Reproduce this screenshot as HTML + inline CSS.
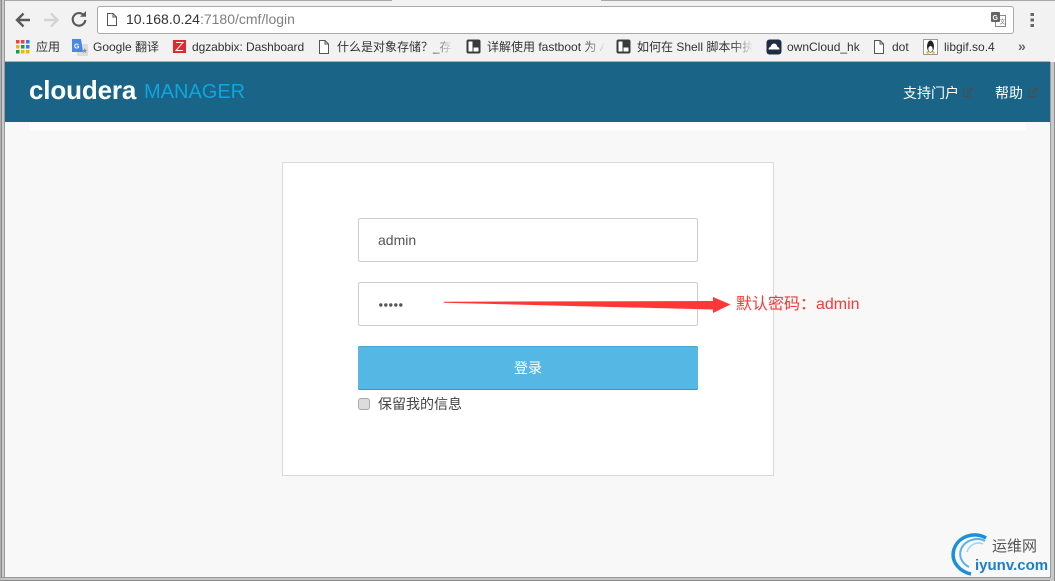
<!DOCTYPE html>
<html>
<head>
<meta charset="utf-8">
<style>
html,body{margin:0;padding:0}
body{width:1055px;height:581px;position:relative;overflow:hidden;background:#f8f8f8;font-family:"Liberation Sans","Noto Sans CJK SC",sans-serif;}
.a{position:absolute;white-space:nowrap}
.bm{position:absolute;top:39px;font-size:12px;line-height:16px;color:#333;white-space:nowrap;overflow:hidden}
.fade{-webkit-mask-image:linear-gradient(90deg,#000 82%,transparent);mask-image:linear-gradient(90deg,#000 82%,transparent)}
svg{position:absolute;overflow:visible}
</style>
</head>
<body>
<!-- chrome -->
<div class="a" style="left:0;top:0;width:1055px;height:62px;background:#f2f2f2"></div>
<div class="a" style="left:0;top:0;width:392px;height:1px;background:#a8a8a8"></div>
<div class="a" style="left:601px;top:0;width:454px;height:1px;background:#a8a8a8"></div>
<div class="a" style="left:5px;top:61px;width:1045px;height:1px;background:#a9b4ba"></div>

<!-- nav icons -->
<svg style="left:0;top:0" width="100" height="40">
<path d="M30 20H18M23.500 13.500L17 20L23.500 26.500" fill="none" stroke="#5a5a5a" stroke-width="2.400"/>
<path d="M44 20H56.500M51 13.500L57.500 20L51 26.500" fill="none" stroke="#d4d4d4" stroke-width="2.400"/>
<path d="M84 15.500A6.300 6.300 0 1 0 85.300 20" fill="none" stroke="#5a5a5a" stroke-width="2.200"/>
<path d="M80 16.800H86V11Z" fill="#5a5a5a"/>
</svg>

<!-- url bar -->
<div class="a" style="left:97px;top:6px;width:915px;height:26px;background:#fff;border:1px solid #a9a9a9;border-radius:3px"></div>
<svg style="left:106px;top:13px" width="12" height="13">
<path d="M1.500 .5H7L10.500 4V12.500H1.500Z M7 .5V4H10.500" fill="#fff" stroke="#555" stroke-width="1"/>
</svg>
<div class="a" style="left:126px;top:11px;font-size:14px;line-height:17px;color:#333">10.168.0.24<span style="color:#808080">:7180/cmf/login</span></div>

<!-- translate icon -->
<svg style="left:991px;top:11px" width="15" height="16">
<rect x="4.500" y="4.500" width="10" height="11" fill="#fff" stroke="#8a8a8a"/>
<rect x="0" y="1" width="9" height="10" fill="#666" rx="1"/>
<text x="1.500" y="9" font-size="7" font-weight="bold" fill="#fff" font-family="Liberation Sans">G</text>
<text x="8.500" y="13" font-size="6" fill="#777" font-family="Noto Sans CJK SC">文</text>
</svg>
<!-- menu dots -->
<svg style="left:1029px;top:12px" width="8" height="16">
<rect x="1.500" y="1" width="3.500" height="3" fill="#666"/><rect x="1.500" y="6.500" width="3.500" height="3" fill="#666"/><rect x="1.500" y="12" width="3.500" height="3" fill="#666"/>
</svg>

<!-- bookmarks -->
<svg style="left:16px;top:40px" width="14" height="14">
<g>
<rect x="0" y="0" width="3.500" height="3.500" fill="#e8453c"/><rect x="5" y="0" width="3.500" height="3.500" fill="#e8453c"/><rect x="10" y="0" width="3.500" height="3.500" fill="#3b78e7"/>
<rect x="0" y="5" width="3.500" height="3.500" fill="#f4b400"/><rect x="5" y="5" width="3.500" height="3.500" fill="#0f9d58"/><rect x="10" y="5" width="3.500" height="3.500" fill="#3b78e7"/>
<rect x="0" y="10" width="3.500" height="3.500" fill="#0f9d58"/><rect x="5" y="10" width="3.500" height="3.500" fill="#f4b400"/><rect x="10" y="10" width="3.500" height="3.500" fill="#f4b400"/>
</g>
</svg>
<div class="bm" style="left:36px">应用</div>

<svg style="left:72px;top:39px" width="17" height="17">
<rect x="5" y="5" width="11" height="12" fill="#dcdcdc"/>
<path d="M0 0H9L11 13H0Z" fill="#4a86e8"/>
<text x="2" y="9.500" font-size="7" font-weight="bold" fill="#fff" font-family="Liberation Sans">G</text>
<text x="9.500" y="14" font-size="7" fill="#888" font-family="Liberation Sans">★</text>
</svg>
<div class="bm" style="left:93px">Google 翻译</div>

<svg style="left:172px;top:39px" width="15" height="15">
<rect x="1" y="1" width="13" height="13" fill="#e2282e"/>
<path d="M4 3.500H11L4 11.500H11" fill="none" stroke="#fff" stroke-width="1"/>
</svg>
<div class="bm" style="left:192px;letter-spacing:-.07px">dgzabbix: Dashboard</div>

<svg style="left:318px;top:40px" width="12" height="15">
<path d="M1.500 .5H7L10.500 4V13.500H1.500Z M7 .5V4H10.500" fill="#fff" stroke="#555" stroke-width="1"/>
</svg>
<div class="bm fade" style="left:337px;width:116px">什么是对象存储？_存储</div>

<svg style="left:466px;top:39px" width="16" height="16">
<rect x=".5" y=".5" width="14" height="14" rx="2" fill="#3a3a3a"/>
<rect x="2.500" y="2.500" width="4" height="10" fill="#fff"/><rect x="7.500" y="8.500" width="5" height="4" fill="#fff"/>
</svg>
<div class="bm fade" style="left:487px;width:118px">详解使用 fastboot 为 A</div>

<svg style="left:616px;top:39px" width="16" height="16">
<rect x=".5" y=".5" width="14" height="14" rx="2" fill="#3a3a3a"/>
<rect x="2.500" y="2.500" width="4" height="10" fill="#fff"/><rect x="7.500" y="8.500" width="5" height="4" fill="#fff"/>
</svg>
<div class="bm fade" style="left:637px;width:116px">如何在 Shell 脚本中执行</div>

<svg style="left:766px;top:39px" width="16" height="16">
<rect x=".5" y=".5" width="15" height="15" rx="3" fill="#1d2d44"/>
<path d="M2.500 10.500C2.500 9 3.500 8 4.500 8C5 6 6.500 4.500 8 4.500C10 4.500 11 6 11.500 8C12.500 8 13.500 9 13.500 10.500Z" fill="#fff"/>
</svg>
<div class="bm" style="left:787px">ownCloud_hk</div>

<svg style="left:873px;top:40px" width="12" height="15">
<path d="M1.500 .5H7L10.500 4V13.500H1.500Z M7 .5V4H10.500" fill="#fff" stroke="#555" stroke-width="1"/>
</svg>
<div class="bm" style="left:892px">dot</div>

<svg style="left:923px;top:39px" width="16" height="17">
<rect x=".5" y=".5" width="14" height="15" fill="#fff" stroke="#999"/>
<ellipse cx="7.500" cy="7.500" rx="3.500" ry="6" fill="#222"/>
<ellipse cx="7.500" cy="10" rx="2.200" ry="3" fill="#fff"/>
<path d="M2.500 14L5.500 11.500V15Z M12.500 14L9.500 11.500V15Z" fill="#e8b020"/>
</svg>
<div class="bm" style="left:944px">libgif.so.4</div>
<div class="a" style="left:1018px;top:38px;font-size:14px;line-height:16px;color:#666;font-weight:bold">»</div>

<!-- header -->
<div class="a" style="left:5px;top:62px;width:1045px;height:60px;background:#1a6587"></div>
<div class="a" style="left:29px;top:75px;font-size:26px;line-height:30px;font-weight:bold;color:#fff;letter-spacing:-.15px">cloudera</div>
<div class="a" style="left:144px;top:79px;font-size:20px;line-height:26px;color:#0fa5dc">MANAGER</div>
<div class="a" style="left:903px;top:84px;font-size:14px;line-height:18px;color:#fff">支持门户</div>
<svg style="left:962px;top:87px" width="12" height="12"><path d="M8 4.500V9.500H1.500V3H6M5 6L10 1M7 1H10V4" fill="none" stroke="#4d4d4d" stroke-width="1"/></svg>
<div class="a" style="left:995px;top:84px;font-size:14px;line-height:18px;color:#fff">帮助</div>
<svg style="left:1027px;top:87px" width="12" height="12"><path d="M8 4.500V9.500H1.500V3H6M5 6L10 1M7 1H10V4" fill="none" stroke="#4d4d4d" stroke-width="1"/></svg>

<!-- white strip -->
<div class="a" style="left:29px;top:122px;width:997px;height:8px;background:#fff"></div>

<!-- card -->
<div class="a" style="left:282px;top:162px;width:490px;height:312px;background:#fff;border:1px solid #d9d9d9"></div>
<div class="a" style="left:358px;top:218px;width:338px;height:42px;background:#fff;border:1px solid #ccc;border-radius:2px"></div>
<div class="a" style="left:378px;top:232px;font-size:14px;line-height:16px;color:#555">admin</div>
<div class="a" style="left:358px;top:282px;width:338px;height:42px;background:#fff;border:1px solid #ccc;border-radius:2px"></div>
<svg style="left:379px;top:302px" width="24" height="6">
<circle cx="1.800" cy="3" r="1.700" fill="#555"/><circle cx="6.800" cy="3" r="1.700" fill="#555"/><circle cx="11.800" cy="3" r="1.700" fill="#555"/><circle cx="16.800" cy="3" r="1.700" fill="#555"/><circle cx="21.800" cy="3" r="1.700" fill="#555"/>
</svg>
<div class="a" style="left:358px;top:346px;width:340px;height:44px;background:#55b7e4;border-radius:2px;box-shadow:inset 0 -1px 0 #3d93bb,inset 0 1px 0 #47a5d2;color:#fff;font-size:14px;line-height:44px;text-align:center">登录</div>
<div class="a" style="left:358px;top:398px;width:10px;height:10px;background:#dcdcdc;border:1px solid #a8a8a8;border-radius:3px"></div>
<div class="a" style="left:378px;top:395px;font-size:14px;line-height:18px;color:#444">保留我的信息</div>

<!-- arrow annotation -->
<svg style="left:0;top:0" width="1055" height="581">
<path d="M444 301.700L713 301L713 297L730.500 304.500L713 313L713 309.500L444 302.800Z" fill="#fb3737"/>
</svg>
<div class="a" style="left:736px;top:295px;font-size:16px;line-height:20px;color:#fb3737">默认密码：admin</div>

<!-- watermark -->
<svg style="left:950px;top:532px" width="50" height="46">
<path d="M36 6C25 -1 7 4 3.500 19C1 31 11 40 21 42" fill="none" stroke="#1c8fd8" stroke-width="3.500"/>
<path d="M35 9C26 4 13 9 10.500 19C9 26 13 32 19 35" fill="none" stroke="#59b3e8" stroke-width="2"/>
<path d="M33 12C27 9 19 13 17 20" fill="none" stroke="#9dd2f2" stroke-width="1.500"/>
</svg>
<div class="a" style="left:992px;top:537px;font-size:15px;line-height:20px;color:#555">运维网</div>
<div class="a" style="left:975px;top:556px;font-size:15px;line-height:20px;font-weight:bold;color:#1b7fc9">iyunv.com</div>

<!-- window frame -->
<div class="a" style="left:0;top:0;width:1px;height:581px;background:#b0b0b0"></div>
<div class="a" style="left:1px;top:0;width:1px;height:581px;background:#8c8c8c"></div>
<div class="a" style="left:2px;top:0;width:2px;height:581px;background:#c9c9c9"></div>
<div class="a" style="left:4px;top:0;width:1px;height:581px;background:#9a9a9a"></div>
<div class="a" style="left:0;top:577px;width:1055px;height:1px;background:#9a9a9a"></div>
<div class="a" style="left:0;top:578px;width:1055px;height:2px;background:#c4c4c4"></div>
<div class="a" style="left:0;top:580px;width:1055px;height:1px;background:#8c8c8c"></div>
<div class="a" style="left:1050px;top:62px;width:5px;height:519px;background:#c9c9c9"></div>
<div class="a" style="left:1050px;top:62px;width:1px;height:516px;background:#9a9a9a"></div>
<div class="a" style="left:1054px;top:62px;width:1px;height:519px;background:#8c8c8c"></div>
</body>
</html>
